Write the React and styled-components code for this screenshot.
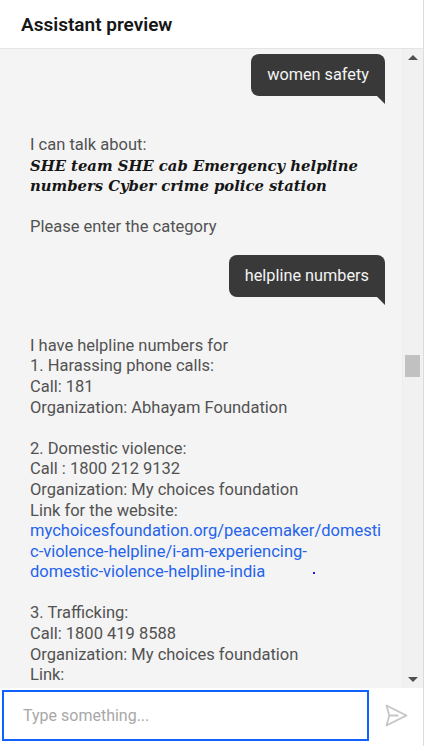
import React from "react";
import styled, { createGlobalStyle } from "styled-components";

const GlobalStyle = createGlobalStyle`
  html, body {
    margin: 0;
    padding: 0;
    background: #ffffff;
  }
  body {
    font-family: Roboto, "Noto Sans", Arial, sans-serif;
  }
  * {
    box-sizing: border-box;
  }
`;

function SendIcon() {
  return (
    <svg width="29" height="29" viewBox="0 0 32 32" fill="#c6c6c6">
      <path d="M27.45,15.11l-22-11a1,1,0,0,0-1.08.12,1,1,0,0,0-.33,1L7,16,4,26.74A1,1,0,0,0,5,28a1,1,0,0,0,.45-.11l22-11a1,1,0,0,0,0-1.78Zm-20.9,10L8.76,17H18V15H8.76L6.55,6.89,24.76,16Z" />
    </svg>
  );
}

export default function App() {
  return (
    <>
      <GlobalStyle />
      <Panel>
        <Header>Assistant preview</Header>
        <ChatArea>
          <Log>
            <UserBubble first>women safety</UserBubble>
            <BotText>
              I can talk about:
              <br />
              <Topics>
                SHE team SHE cab Emergency helpline numbers Cyber crime police station
              </Topics>
              <br />
              <br />
              Please enter the category
            </BotText>
            <UserBubble>helpline numbers</UserBubble>
            <BotText>
              I have helpline numbers for
              <br />
              1. Harassing phone calls:
              <br />
              Call: 181
              <br />
              Organization: Abhayam Foundation
              <br />
              <br />
              2. Domestic violence:
              <br />
              Call : 1800 212 9132
              <br />
              Organization: My choices foundation
              <br />
              Link for the website:
              <br />
              <Link href="#">
                mychoicesfoundation.org/peacemaker/domesti
                <br />
                c-violence-helpline/i-am-experiencing-
                <br />
                domestic-violence-helpline-india
              </Link>
              <Dot />
              <br />
              <br />
              3. Trafficking:
              <br />
              Call: 1800 419 8588
              <br />
              Organization: My choices foundation
              <br />
              Link:
              <br />
              <Link href="#">mychoicesfoundation.org/peacemaker/trafficking</Link>
            </BotText>
          </Log>
          <Scrollbar>
            <ArrowButton>
              <Arrow up />
            </ArrowButton>
            <Track>
              <Thumb style={{ marginTop: 289 }} />
            </Track>
            <ArrowButton>
              <Arrow />
            </ArrowButton>
          </Scrollbar>
        </ChatArea>
        <InputBar>
          <TextInput autoFocus placeholder="Type something..." />
          <SendButton aria-label="Send">
            <SendIcon />
          </SendButton>
        </InputBar>
      </Panel>
    </>
  );
}

const Panel = styled.div`
  width: 424px;
  height: 746px;
  border-right: 1px solid #dcdcdc;
  display: flex;
  flex-direction: column;
  background: #ffffff;
`;

const Header = styled.div`
  height: 49px;
  flex-shrink: 0;
  padding-left: 21px;
  display: flex;
  align-items: center;
  border-bottom: 1px solid #e4e4e4;
  font-size: 19px;
  font-weight: 600;
  color: #161616;
`;

const ChatArea = styled.div`
  flex: 1;
  min-height: 0;
  display: flex;
  background: #f4f4f4;
`;

const Log = styled.div`
  flex: 1;
  min-width: 0;
  overflow: hidden;
  padding: 5px 17px 0 30px;
  display: flex;
  flex-direction: column;
`;

const UserBubble = styled.div`
  position: relative;
  align-self: flex-end;
  margin-top: ${props => (props.first ? "0" : "17px")};
  padding: 11px 16px;
  border-radius: 8px 8px 0 8px;
  background: #393939;
  color: #f4f4f4;
  font-size: 16.3px;
  line-height: 20px;

  &::after {
    content: "";
    position: absolute;
    right: 0;
    top: 100%;
    border-left: 8px solid transparent;
    border-top: 8px solid #393939;
  }
`;

const BotText = styled.div`
  margin-top: 39px;
  color: #525252;
  font-size: 16.5px;
  line-height: 20.58px;
`;

const Topics = styled.span`
  font-family: "DejaVu Serif", "Liberation Serif", serif;
  font-style: italic;
  font-weight: bold;
  font-size: 14.8px;
  color: #161616;
`;

const Link = styled.a`
  color: #2563eb;
  text-decoration: none;
`;

const Dot = styled.span`
  display: inline-block;
  width: 2px;
  height: 2px;
  margin-left: 48px;
  vertical-align: middle;
  background: #1a1aff;
`;

const Scrollbar = styled.div`
  width: 21px;
  flex-shrink: 0;
  display: flex;
  flex-direction: column;
  background: #f1f1f1;
  border-left: 1px solid #ececec;
`;

const ArrowButton = styled.div`
  height: 17px;
  display: flex;
  align-items: center;
  justify-content: center;
`;

const Arrow = styled.span`
  width: 0;
  height: 0;
  border-left: 5px solid transparent;
  border-right: 5px solid transparent;
  ${props =>
    props.up
      ? "border-bottom: 5px solid #505050;"
      : "border-top: 5px solid #505050;"}
`;

const Track = styled.div`
  flex: 1;
  padding-left: 2px;
`;

const Thumb = styled.div`
  width: 15px;
  height: 22px;
  background: #c1c1c1;
`;

const InputBar = styled.div`
  height: 58px;
  flex-shrink: 0;
  display: flex;
  padding: 2px 0 0 2px;
  background: #ffffff;
`;

const TextInput = styled.input`
  width: 367px;
  height: 51px;
  border: 2px solid #0f62fe;
  outline: none;
  padding: 0 0 0 19px;
  font-family: Roboto, "Noto Sans", Arial, sans-serif;
  font-size: 16px;
  color: #161616;
  caret-color: #161616;
  background: #ffffff;

  &::placeholder {
    color: #a8a8a8;
  }
`;

const SendButton = styled.button`
  flex: 1;
  height: 51px;
  border: none;
  background: transparent;
  padding: 0;
  display: flex;
  align-items: center;
  justify-content: center;
  cursor: pointer;
`;
